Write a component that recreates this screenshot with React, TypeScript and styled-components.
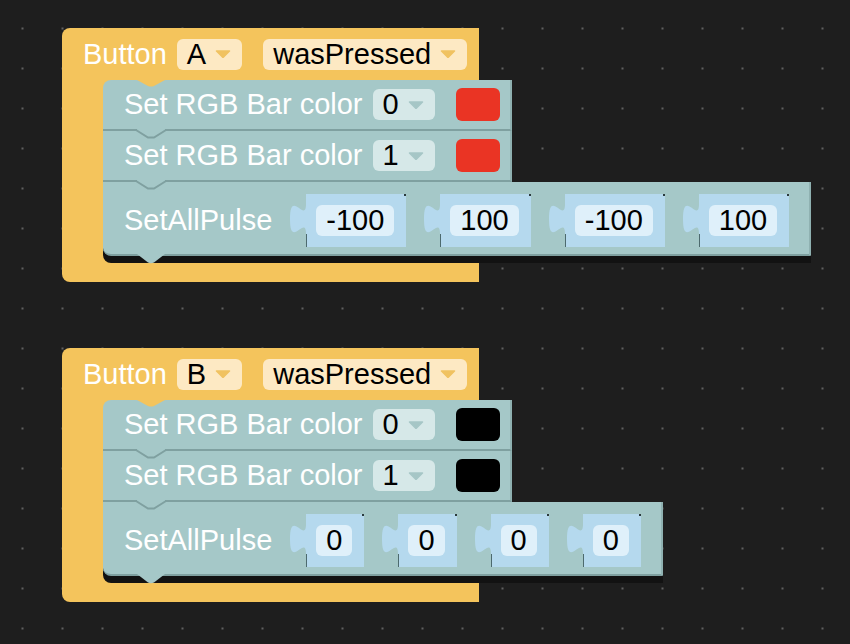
import React from "react";
import styled, { createGlobalStyle } from "styled-components";

const C = {
  bg: "#1e1e1e",
  hat: "#f4c45c",
  hatField: "#fde9c3",
  hatArrow: "#f0c261",
  teal: "#a5c8c8",
  tealDark: "#7fa0a0",
  tealEdge: "#8fb1b1",
  tealField: "#d6e8e8",
  tealArrow: "#a6c6c6",
  slot: "#b5d9ee",
  numField: "#dff0fa",
  shadow: "#121212",
};

const FONT = 29;

const GlobalStyle = createGlobalStyle`
  html, body { margin: 0; padding: 0; background: ${C.bg}; }
  body { font-family: "Liberation Sans", Arial, sans-serif; }
`;

const Workspace = styled.div`
  position: relative;
  width: 850px;
  height: 644px;
  overflow: hidden;
  background-color: ${C.bg};
  background-image: radial-gradient(circle at center, #606060 0 1px, transparent 1.4px);
  background-size: 40px 40px;
  background-position: 2.5px 8.5px;
`;

const Stack = styled.div<{ $x: number; $y: number }>`
  position: absolute;
  left: ${(p) => p.$x}px;
  top: ${(p) => p.$y}px;
`;

const Hat = styled.div`
  display: inline-flex;
  flex-direction: column;
  background: ${C.hat};
  border-radius: 8px 0 0 8px;
`;

const HatTop = styled.div`
  display: flex;
  align-items: center;
  height: 52px;
  box-sizing: border-box;
  padding: 0 12px 0 21px;
  white-space: nowrap;
`;

const HatBody = styled.div`
  display: flex;
`;

const Arm = styled.div`
  width: 41px;
  flex: none;
`;

const Statements = styled.div`
  flex: 0 0 0;
  width: 0;
  display: flex;
  flex-direction: column;
  align-items: flex-start;
`;

const BottomArm = styled.div`
  height: 26px;
`;

const Label = styled.span<{ $gap?: number }>`
  color: #fff;
  font-size: ${FONT}px;
  line-height: 1;
  margin-right: ${(p) => p.$gap ?? 0}px;
`;

const Dropdown = styled.div<{ $tone: "hat" | "teal"; $gap?: number }>`
  display: inline-flex;
  align-items: center;
  gap: 9px;
  height: 31px;
  box-sizing: border-box;
  padding: 0 11px 0 10px;
  border-radius: 6px;
  background: ${(p) => (p.$tone === "hat" ? C.hatField : C.tealField)};
  color: #000;
  font-size: ${FONT}px;
  line-height: 1;
  margin-right: ${(p) => p.$gap ?? 0}px;
`;

const Arrow = styled.svg`
  width: 16px;
  height: 8px;
  display: block;
  flex: none;
`;

const Swatch = styled.div<{ $color: string }>`
  width: 44px;
  height: 33px;
  border-radius: 6px;
  background: ${(p) => p.$color};
`;

const Statement = styled.div<{ $tall?: boolean; $first?: boolean; $last?: boolean }>`
  position: relative;
  display: flex;
  align-items: center;
  box-sizing: border-box;
  width: max-content;
  white-space: nowrap;
  height: ${(p) => (p.$tall ? 74 : 51)}px;
  padding: ${(p) => (p.$tall ? "12px 20px 7px 21px" : "0 10px 0 21px")};
  background: ${C.teal};
  border-bottom: 2px solid ${C.tealDark};
  border-right: 2px solid ${C.tealEdge};
  border-top-left-radius: ${(p) => (p.$first ? 8 : 0)}px;
  border-bottom-left-radius: ${(p) => (p.$last ? 8 : 0)}px;
  box-shadow: ${(p) => (p.$last ? `0 7px 0 ${C.shadow}` : "none")};
`;

const NotchSvg = styled.svg<{ $place: "top" | "bottom" }>`
  position: absolute;
  left: 34px;
  width: 28px;
  height: 10px;
  display: block;
  overflow: visible;
  ${(p) => (p.$place === "top" ? "top: -2px;" : "top: 100%;")}
`;

const ValueInput = styled.div`
  display: flex;
  height: 53px;
  margin-left: 16px;
`;

const TabSvg = styled.svg`
  width: 18px;
  height: 53px;
  flex: none;
  display: block;
  overflow: visible;
`;

const SlotBox = styled.div`
  position: relative;
  display: flex;
  align-items: center;
  background: ${C.slot};
  padding: 0 12px 0 10px;
  &::before {
    content: "";
    position: absolute;
    left: 0;
    top: 40px;
    bottom: 0;
    width: 1px;
    background: #4d6a6e;
  }
  &::after {
    content: "";
    position: absolute;
    right: 0;
    top: 0;
    width: 2px;
    height: 2px;
    background: #2b3a3c;
  }
`;

const NumberField = styled.div`
  display: flex;
  align-items: center;
  height: 31px;
  padding: 0 10px;
  border-radius: 6px;
  background: ${C.numField};
  color: #000;
  font-size: ${FONT}px;
  line-height: 1;
`;

const DropArrow = ({ color }: { color: string }) => (
  <Arrow viewBox="0 0 16 8">
    <path d="M1.5 1 L14.5 1 L8 7.5 Z" fill={color} stroke={color} strokeWidth="1.5" strokeLinejoin="round" />
  </Arrow>
);

const TopNotch = ({ first }: { first: boolean }) => (
  <NotchSvg $place="top" viewBox="0 0 28 10">
    {first ? (
      <path d="M0 0 L28 0 L28 2 L17 8 Q14 9 11 8 L0 2 Z" fill={C.hat} />
    ) : (
      <>
        <path d="M0 0 L28 0 L28 2 L17 9 L11 9 L0 2 Z" fill={C.teal} />
        <path d="M-1 1 L11 8.5 L17 8.5 L29 1" fill="none" stroke={C.tealDark} strokeWidth="2" />
      </>
    )}
  </NotchSvg>
);

const BottomTab = () => (
  <NotchSvg $place="bottom" viewBox="0 0 28 10">
    <path d="M0 0 L28 0 L17 8.5 Q14 10 11 8.5 Z" fill={C.teal} />
  </NotchSvg>
);

const PuzzleTab = () => (
  <TabSvg viewBox="0 0 18 53">
    <path d="M18 10 C18 30 2 -6 2 25 S18 20 18 40 L19 40 L19 10 Z" fill={C.slot} />
  </TabSvg>
);

type ColorRow = { index: string; color: string };

const ColorStatement = ({ row, first }: { row: ColorRow; first: boolean }) => (
  <Statement $first={first}>
    <TopNotch first={first} />
    <Label $gap={10}>Set RGB Bar color</Label>
    <Dropdown $tone="teal" $gap={21}>
      <span>{row.index}</span>
      <DropArrow color={C.tealArrow} />
    </Dropdown>
    <Swatch $color={row.color} />
  </Statement>
);

const PulseStatement = ({ values }: { values: string[] }) => (
  <Statement $tall $last>
    <TopNotch first={false} />
    <Label>SetAllPulse</Label>
    {values.map((v, i) => (
      <ValueInput key={i}>
        <PuzzleTab />
        <SlotBox>
          <NumberField>{v}</NumberField>
        </SlotBox>
      </ValueInput>
    ))}
    <BottomTab />
  </Statement>
);

type Program = { x: number; y: number; button: string; color: string; pulses: string[] };

const programs: Program[] = [
  { x: 62, y: 28, button: "A", color: "#ea3424", pulses: ["-100", "100", "-100", "100"] },
  { x: 62, y: 348, button: "B", color: "#000000", pulses: ["0", "0", "0", "0"] },
];

const ButtonEvent = ({ p }: { p: Program }) => (
  <Stack $x={p.x} $y={p.y}>
    <Hat>
      <HatTop>
        <Label $gap={10}>Button</Label>
        <Dropdown $tone="hat" $gap={21}>
          <span>{p.button}</span>
          <DropArrow color={C.hatArrow} />
        </Dropdown>
        <Dropdown $tone="hat">
          <span>wasPressed</span>
          <DropArrow color={C.hatArrow} />
        </Dropdown>
      </HatTop>
      <HatBody>
        <Arm />
        <Statements>
          <ColorStatement row={{ index: "0", color: p.color }} first />
          <ColorStatement row={{ index: "1", color: p.color }} first={false} />
          <PulseStatement values={p.pulses} />
        </Statements>
      </HatBody>
      <BottomArm />
    </Hat>
  </Stack>
);

export default function App() {
  return (
    <>
      <GlobalStyle />
      <Workspace>
        {programs.map((p, i) => (
          <ButtonEvent key={i} p={p} />
        ))}
      </Workspace>
    </>
  );
}
